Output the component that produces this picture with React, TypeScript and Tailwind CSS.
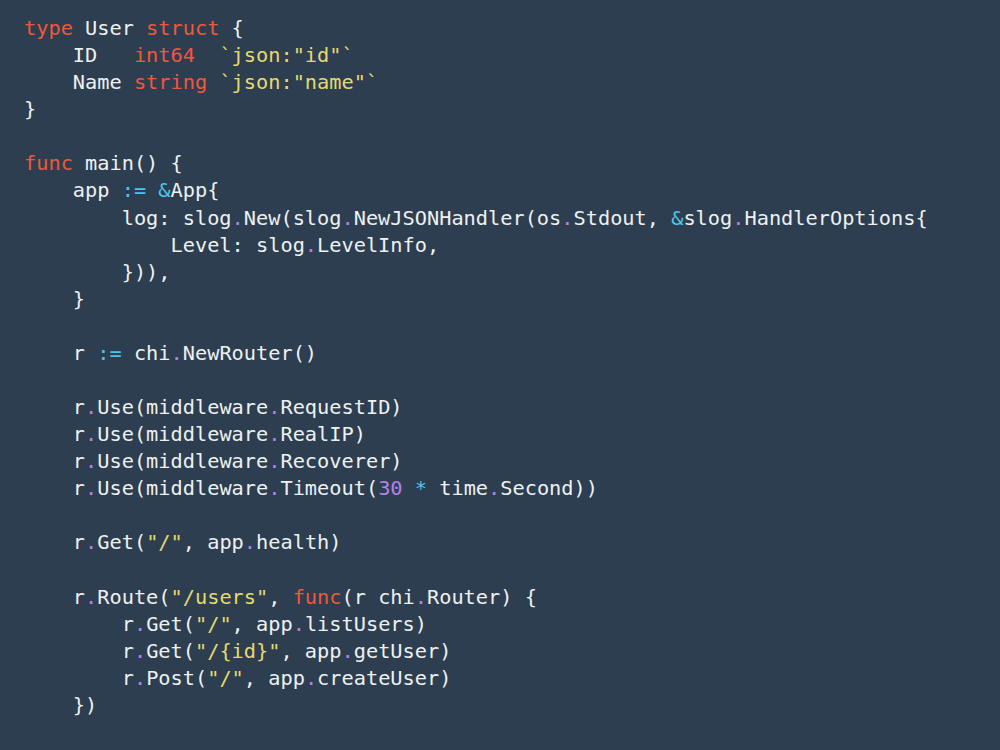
import React from "react";

type Tok = [string, string?];

const K = "text-[#f0583a]";
const S = "text-[#e6d96f]";
const O = "text-[#4fc3e8]";
const P = "text-[#b681e8]";

const dot: Tok = [".", P];

const lines: Tok[][] = [
  [["type", K], [" User "], ["struct", K], [" {"]],
  [["    ID   "], ["int64", K], ["  "], ['`json:"id"`', S]],
  [["    Name "], ["string", K], [" "], ['`json:"name"`', S]],
  [["}"]],
  [],
  [["func", K], [" main() {"]],
  [["    app "], [":=", O], [" "], ["&", O], ["App{"]],
  [
    ["        log: slog"],
    dot,
    ["New(slog"],
    dot,
    ["NewJSONHandler(os"],
    dot,
    ["Stdout, "],
    ["&", O],
    ["slog"],
    dot,
    ["HandlerOptions{"],
  ],
  [["            Level: slog"], dot, ["LevelInfo,"]],
  [["        })),"]],
  [["    }"]],
  [],
  [["    r "], [":=", O], [" chi"], dot, ["NewRouter()"]],
  [],
  [["    r"], dot, ["Use(middleware"], dot, ["RequestID)"]],
  [["    r"], dot, ["Use(middleware"], dot, ["RealIP)"]],
  [["    r"], dot, ["Use(middleware"], dot, ["Recoverer)"]],
  [
    ["    r"],
    dot,
    ["Use(middleware"],
    dot,
    ["Timeout("],
    ["30", P],
    [" "],
    ["*", O],
    [" time"],
    dot,
    ["Second))"],
  ],
  [],
  [["    r"], dot, ["Get("], ['"/"', S], [", app"], dot, ["health)"]],
  [],
  [
    ["    r"],
    dot,
    ["Route("],
    ['"/users"', S],
    [", "],
    ["func", K],
    ["(r chi"],
    dot,
    ["Router) {"],
  ],
  [["        r"], dot, ["Get("], ['"/"', S], [", app"], dot, ["listUsers)"]],
  [["        r"], dot, ["Get("], ['"/{id}"', S], [", app"], dot, ["getUser)"]],
  [["        r"], dot, ["Post("], ['"/"', S], [", app"], dot, ["createUser)"]],
  [["    })"]],
  [],
  [["    var srv = newserver(r, mw,"]],
];

export default function App() {
  return (
    <div className="w-[1000px] h-[750px] overflow-hidden bg-[#2c3e50] pl-6 pt-[15px]">
      <pre className="font-['DejaVu_Sans_Mono',monospace] text-[20.3px] leading-[27.08px] text-[#eef1f2]">
        {lines.map((line, i) => (
          <div key={i} className="h-[27.08px] whitespace-pre">
            {line.map(([t, c], j) => (
              <span key={j} className={c}>
                {t}
              </span>
            ))}
          </div>
        ))}
      </pre>
    </div>
  );
}
